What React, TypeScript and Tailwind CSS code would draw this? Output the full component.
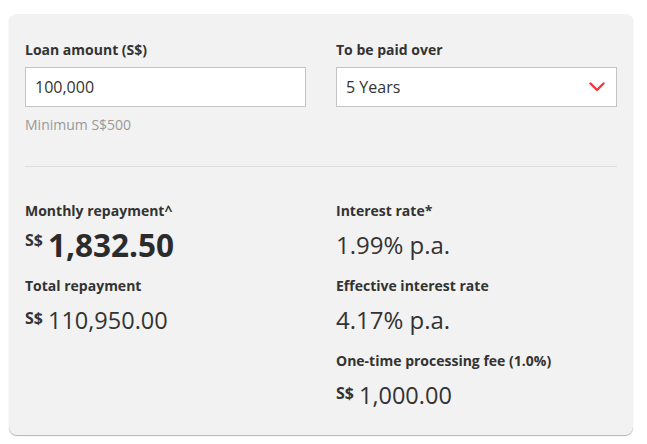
import React from "react";

function Amount({ value, big }: { value: string; big?: boolean }) {
  return (
    <div className="flex h-[40px] items-start">
      <span
        className={
          "text-[16px] font-bold leading-[16px] text-[#333] mr-[5px] " +
          (big ? "mt-[7px]" : "mt-[10px]")
        }
      >
        S$
      </span>
      <span
        className={
          big
            ? "text-[31.5px] font-bold leading-[40px] text-[#2b2b2b]"
            : "text-[23.5px] leading-[40px] text-[#333]"
        }
      >
        {value}
      </span>
    </div>
  );
}

function Label({ children }: { children: React.ReactNode }) {
  return <div className="text-[14px] font-bold leading-[20px] text-[#333]">{children}</div>;
}

function Cell({ label, children }: { label: string; children: React.ReactNode }) {
  return (
    <div className="flex flex-col">
      <Label>{label}</Label>
      <div className="mt-[4px]">{children}</div>
    </div>
  );
}

export default function App() {
  return (
    <div
      className="min-h-[444px] bg-white pt-[14px] pl-[9px]"
      style={{ fontFamily: '"Open Sans", "Noto Sans", sans-serif' }}
    >
      <div className="w-[624px] rounded-[8px] bg-[#f2f2f2] px-[16px] pt-[26px] pb-[20px] shadow-[0_1px_1px_rgba(0,0,0,0.3)]">
        <div className="grid grid-cols-2 gap-x-[30px]">
          <div className="flex flex-col">
            <Label>Loan amount (S$)</Label>
            <div className="mt-[7px] flex h-[40px] items-center border border-[#c4c4c4] bg-white px-[9px] text-[16px] text-[#333]">
              100,000
            </div>
            <div className="mt-[8px] text-[14px] leading-[20px] text-[#999]">Minimum S$500</div>
          </div>
          <div className="flex flex-col">
            <Label>To be paid over</Label>
            <div className="mt-[7px] flex h-[40px] items-center justify-between border border-[#c4c4c4] bg-white pl-[9px] pr-[11px] text-[16px] text-[#333]">
              <span>5 Years</span>
              <svg width="16" height="10" viewBox="0 0 16 10" fill="none">
                <path d="M1.5 1.5 L8 8 L14.5 1.5" stroke="#f5333f" strokeWidth="2.4" strokeLinecap="round" strokeLinejoin="round" />
              </svg>
            </div>
          </div>
        </div>

        <div className="mt-[31px] h-px bg-[#dcdcdc]" />

        <div className="mt-[34px] grid grid-cols-2 gap-x-[30px] gap-y-[11px]">
          <Cell label="Monthly repayment^">
            <Amount value="1,832.50" big />
          </Cell>
          <Cell label="Interest rate*">
            <div className="text-[24px] leading-[40px] text-[#333]">1.99% p.a.</div>
          </Cell>
          <Cell label="Total repayment">
            <Amount value="110,950.00" />
          </Cell>
          <Cell label="Effective interest rate">
            <div className="text-[24px] leading-[40px] text-[#333]">4.17% p.a.</div>
          </Cell>
          <div />
          <Cell label="One-time processing fee (1.0%)">
            <Amount value="1,000.00" />
          </Cell>
        </div>
      </div>
    </div>
  );
}
